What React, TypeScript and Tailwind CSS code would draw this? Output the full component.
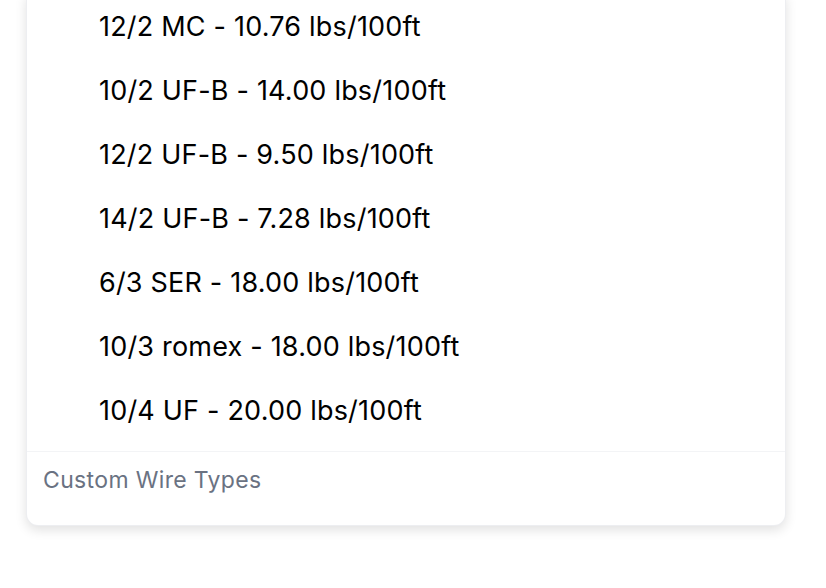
import React from 'react';

const wireTypes = [
  '12/2 MC - 10.76 lbs/100ft',
  '10/2 UF-B - 14.00 lbs/100ft',
  '12/2 UF-B - 9.50 lbs/100ft',
  '14/2 UF-B - 7.28 lbs/100ft',
  '6/3 SER - 18.00 lbs/100ft',
  '10/3 romex - 18.00 lbs/100ft',
  '10/4 UF - 20.00 lbs/100ft',
];

const App: React.FC = () => {
  return (
    <div
      className="min-h-[588px] w-full bg-white overflow-hidden pl-[26px] pr-[40px]"
      style={{ fontFamily: 'Inter, "Noto Sans", sans-serif' }}
    >
      {/* Dropdown panel, scrolled so its top is off screen */}
      <div className="mt-[-6px] bg-white rounded-b-xl border border-gray-200/70 shadow-[0_4px_12px_rgba(0,0,0,0.12)]">
        <ul className="pb-2">
          {wireTypes.map((w) => (
            <li key={w} className="h-16 flex items-center pl-[72px] text-[27px] text-black tracking-[0.2px]">
              {w}
            </li>
          ))}
        </ul>
        <div className="border-t border-gray-100 pl-4 pt-[14px] pb-[31px] text-[23px] leading-7 text-gray-500 tracking-[0.35px]">
          Custom Wire Types
        </div>
      </div>
    </div>
  );
};

export default App;
